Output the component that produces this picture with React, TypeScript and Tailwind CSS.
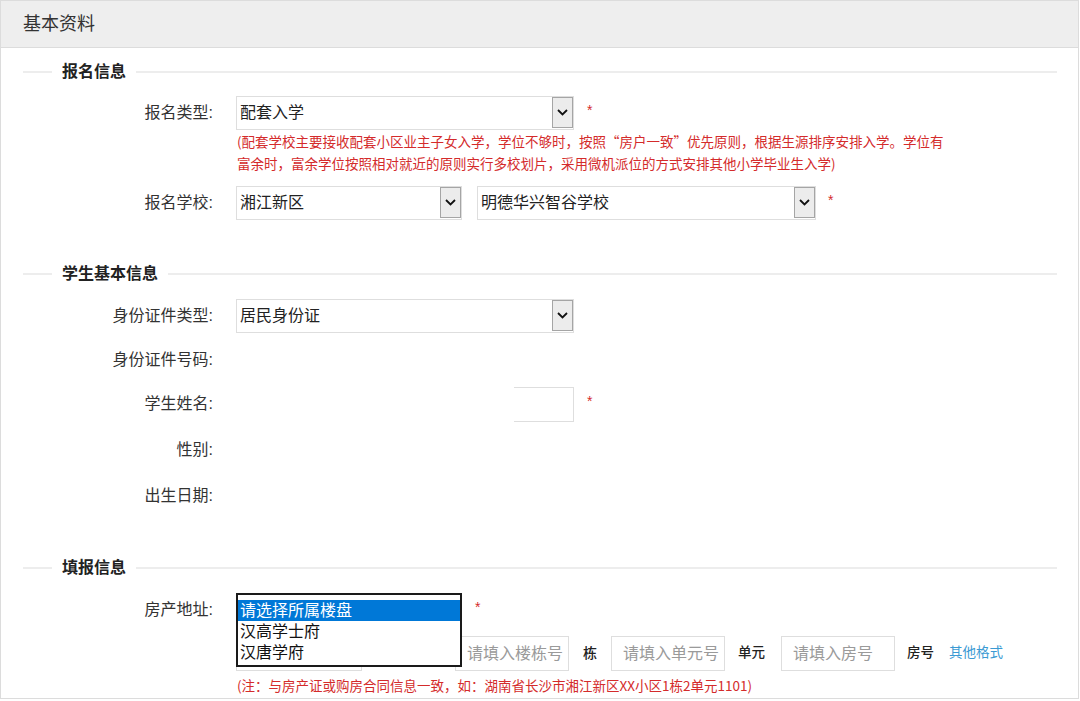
import type { ReactNode } from 'react';

const RED = 'text-[#d42b2b]';

function Chevron() {
  return (
    <svg width="11" height="7" viewBox="0 0 11 7" fill="none">
      <path d="M1 1l4.5 4.5L10 1" stroke="#111" strokeWidth="1.8" />
    </svg>
  );
}

function FakeSelect({ value, className }: { value: string; className: string }) {
  return (
    <div className={`flex h-[34px] items-stretch border border-[#dedede] bg-white ${className}`}>
      <span className="flex flex-1 items-center pl-[3px] text-[16px] text-[#222]">{value}</span>
      <span className="mb-[1px] flex w-[21px] items-center justify-center border border-[#a5a5a5] bg-[#ececec]">
        <Chevron />
      </span>
    </div>
  );
}

function Star({ className = 'ml-[13px]' }: { className?: string }) {
  return <span className={`${className} -mt-[6px] text-[14px] ${RED}`}>*</span>;
}

function Row({ label, className = '', children }: { label: string; className?: string; children?: ReactNode }) {
  return (
    <div className={`flex h-[34px] items-center ${className}`}>
      <div className="w-[212px] shrink-0 text-right text-[16px] text-[#333]">{label}</div>
      <div className="ml-[23px] flex h-full items-center">{children}</div>
    </div>
  );
}

function SectionTitle({ title, className }: { title: string; className: string }) {
  return (
    <div className={`flex h-[22px] items-center pl-[22px] pr-[21px] ${className}`}>
      <div className="h-[2px] w-[29px] bg-[#ededed]" />
      <div className="px-[10px] text-[16px] font-bold text-[#222]">{title}</div>
      <div className="h-[2px] flex-1 bg-[#ededed]" />
    </div>
  );
}

function TextBox({ placeholder, className }: { placeholder?: string; className: string }) {
  return (
    <div className={`flex h-[35px] items-center border border-[#dedede] bg-white pl-[11px] text-[16px] text-[#9a9a9a] ${className}`}>
      {placeholder}
    </div>
  );
}

export default function App() {
  return (
    <div className="h-[701px] w-[1080px] overflow-hidden bg-white font-['Liberation_Sans','Noto_Sans_CJK_SC',sans-serif]">
      <div className="h-[699px] w-[1079px] border border-[#dcdcdc]">
        {/* 标题栏 */}
        <div className="flex h-[47px] items-center border-b border-[#dcdcdc] bg-[#eeeeee] pl-[22px] text-[18px] text-[#333]">
          基本资料
        </div>

        {/* 报名信息 */}
        <SectionTitle title="报名信息" className="mt-[13px]" />
        <Row label="报名类型:" className="mt-[13px]">
          <FakeSelect value="配套入学" className="w-[338px]" />
          <Star />
        </Row>
        <div className={`ml-[236px] w-[740px] font-['Noto_Sans_CJK_SC',sans-serif] text-[13.5px] leading-[22px] ${RED}`}>
          (配套学校主要接收配套小区业主子女入学，学位不够时，按照“房户一致”优先原则，根据生源排序安排入学。学位有
          <br />
          富余时，富余学位按照相对就近的原则实行多校划片，采用微机派位的方式安排其他小学毕业生入学)
        </div>
        <Row label="报名学校:" className="mt-[12px]">
          <FakeSelect value="湘江新区" className="w-[226px]" />
          <FakeSelect value="明德华兴智谷学校" className="ml-[15px] w-[339px]" />
          <Star className="ml-[12px]" />
        </Row>

        {/* 学生基本信息 */}
        <SectionTitle title="学生基本信息" className="mt-[43px]" />
        <Row label="身份证件类型:" className="mt-[14px]">
          <FakeSelect value="居民身份证" className="w-[338px]" />
        </Row>
        <Row label="身份证件号码:" className="mt-[10px]" />
        <Row label="学生姓名:" className="mt-[10px]">
          <div className="ml-[278px] h-[35px] w-[60px] border-y border-r border-[#dedede]" />
          <Star />
        </Row>
        <Row label="性别:" className="mt-[12px]" />
        <Row label="出生日期:" className="mt-[12px]" />

        {/* 填报信息 */}
        <SectionTitle title="填报信息" className="mt-[44px]" />
        <Row label="房产地址:" className="mt-[14px]">
          <div className="relative h-[34px] w-[226px]">
            <FakeSelect value="请选择所属楼盘" className="w-[226px]" />
            <div className="absolute left-0 top-0 z-10 w-[226px] border-2 border-[#1a1a1a] bg-white pt-[5px] pb-[2px] text-[16px] leading-[21px] text-[#111]">
              <div className="bg-[#0078d7] pl-[2px] text-white">请选择所属楼盘</div>
              <div className="pl-[2px]">汉高学士府</div>
              <div className="pl-[2px]">汉唐学府</div>
            </div>
          </div>
          <Star />
        </Row>
        <Row label="" className="mt-[9px] h-[35px]">
          <TextBox className="w-[126px]" />
          <TextBox placeholder="请填入楼栋号" className="ml-[93px] w-[114px]" />
          <span className="ml-[14px] text-[14px] font-medium text-[#222]">栋</span>
          <TextBox placeholder="请填入单元号" className="ml-[14px] w-[114px]" />
          <span className="ml-[13px] text-[13.5px] font-medium text-[#222]">单元</span>
          <TextBox placeholder="请填入房号" className="ml-[16px] w-[114px]" />
          <span className="ml-[12px] text-[13.5px] font-medium text-[#222]">房号</span>
          <span className="ml-[15px] text-[13.5px] text-[#3a9ad3]">其他格式</span>
        </Row>
        <div className={`ml-[236px] mt-[4px] font-['Noto_Sans_CJK_SC',sans-serif] text-[13.5px] leading-[20px] ${RED}`}>
          (注：与房产证或购房合同信息一致，如：湖南省长沙市湘江新区XX小区1栋2单元1101)
        </div>
      </div>
    </div>
  );
}
